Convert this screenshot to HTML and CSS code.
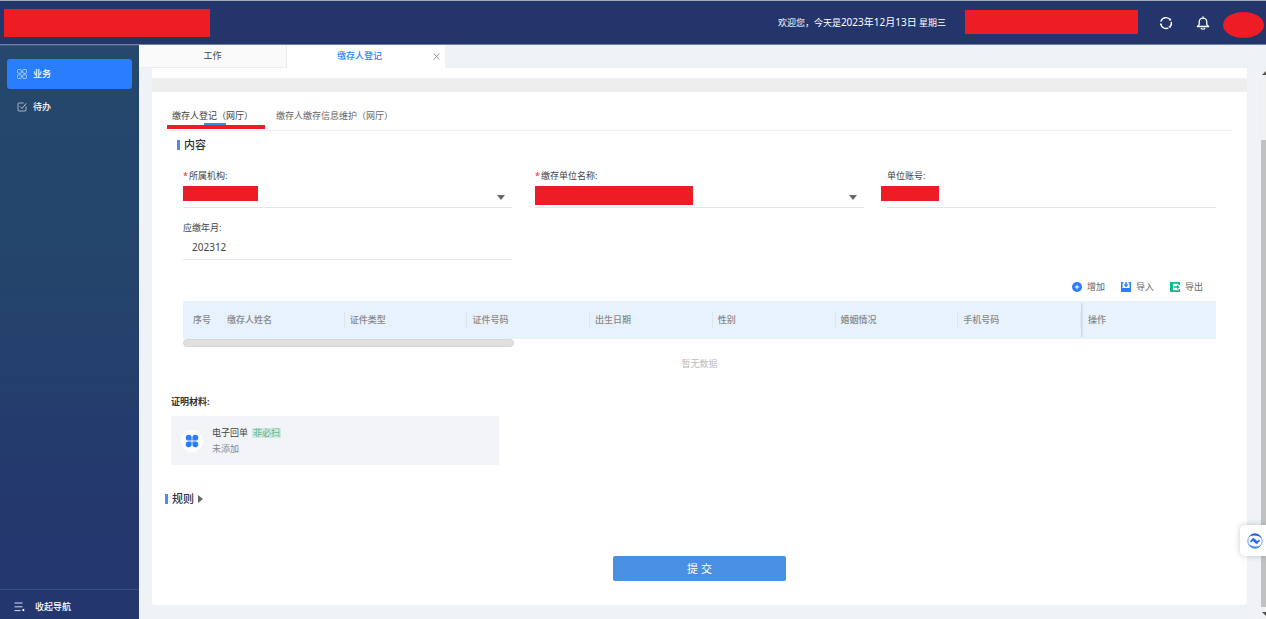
FILE: index.html
```html
<!DOCTYPE html>
<html lang="zh-CN">
<head>
<meta charset="utf-8">
<title>缴存人登记</title>
<link rel="stylesheet" href="styles.css">
</head>
<body>
<div class="app">
  <header class="header">
    <span class="mask mask-logo"></span>
    <span class="greeting">欢迎您，今天是<time datetime="2023-12-13">2023年12月13日</time> 星期三</span>
    <span class="mask mask-company"></span>
    <button class="icon-btn refresh" type="button" aria-label="刷新">
      <svg width="14" height="14" viewBox="0 0 14 14" fill="none" stroke="#fff" stroke-width="1.4"><path d="M1.8 5.6A5.4 5.4 0 0 1 11.4 3.9M12.3 5.8A5.4 5.4 0 0 1 11.2 10.4M9.4 11.9A5.4 5.4 0 0 1 1.7 8"/><path d="M9.9 4.4l2.300.2-.3-2.300zM12.300 9.400l-3 1.200 2 1.600zM.800 9.200l.8-2.300 1.800 1.700z" fill="#fff" stroke="none"/></svg>
    </button>
    <button class="icon-btn bell" type="button" aria-label="通知">
      <svg width="14" height="14" viewBox="0 0 14 14" fill="none" stroke="#fff" stroke-width="1.300" stroke-linejoin="round" stroke-linecap="round"><path d="M7 .8v1.100M3.200 8.600V5.900a3.800 3.800 0 0 1 7.600 0v2.700l1.800 1.900H1.400zM5.200 12.400c.8 1 2.800 1 3.600 0"/></svg>
    </button>
    <span class="mask mask-avatar"></span>
  </header>

  <div class="body">
    <nav class="sidebar" aria-label="导航">
      <div class="menu">
        <a class="menu-item active" href="#">
          <svg width="10" height="10" viewBox="0 0 10 10" fill="none" stroke="#b9d4ff" stroke-width="0.9"><rect x=".5" y=".5" width="3.8" height="3.8" rx="1"/><rect x="5.7" y=".5" width="3.8" height="3.8" rx="1"/><rect x=".5" y="5.7" width="3.8" height="3.8" rx="1"/><rect x="5.7" y="5.7" width="3.8" height="3.8" rx="1"/></svg>
          业务</a>
        <a class="menu-item" href="#">
          <svg width="10" height="10" viewBox="0 0 10 10" fill="none" stroke="#b4c0cf" stroke-width="0.9"><path d="M6.6 1H2a1 1 0 0 0-1 1v6a1 1 0 0 0 1 1h6a1 1 0 0 0 1-1V4.4"/><path d="M3 4.5l2 2L9.2 1.4" stroke-width="1"/></svg>
          待办</a>
      </div>
      <button class="collapse" type="button">
        <svg width="11" height="10" viewBox="0 0 11 10" fill="none" stroke="#d5dbea" stroke-width="1"><path d="M.5 1h8M.5 4.8h8M.5 8.6h6"/><path d="M10.2 6.6v2.8L7.6 8z" fill="#fff" stroke="none"/></svg>
        收起导航</button>
    </nav>

    <main class="main">
      <div class="page-tabs">
        <button class="page-tab" type="button">工作</button>
        <div class="page-tab current"><span>缴存人登记</span>
          <button class="close" type="button" aria-label="关闭"><svg width="7" height="7" viewBox="0 0 7 7" stroke="#8a8a8a" stroke-width="0.9"><path d="M.7.5l5.6 6M6.3.5l-5.6 6"/></svg></button>
        </div>
      </div>
      <div class="content">
        <div class="previous"></div>
        <section class="panel">
          <div class="sub-tabs" role="tablist">
            <button class="sub-tab selected" type="button" role="tab" aria-selected="true">缴存人登记（网厅）</button>
            <button class="sub-tab" type="button" role="tab" aria-selected="false">缴存人缴存信息维护（网厅）</button>
          </div>

          <form class="form">
            <h2 class="title title-content">内容</h2>
            <div class="fields">
              <div class="field">
                <label for="org"><i class="req">*</i>所属机构:</label>
                <div class="control">
                  <select id="org"><option></option></select>
                  <span class="caret"></span>
                  <span class="mask mask-org"></span>
                </div>
              </div>
              <div class="field">
                <label for="unit"><i class="req">*</i>缴存单位名称:</label>
                <div class="control">
                  <select id="unit"><option></option></select>
                  <span class="caret"></span>
                  <span class="mask mask-unit"></span>
                </div>
              </div>
              <div class="field">
                <label for="account">单位账号:</label>
                <div class="control">
                  <input id="account" type="text">
                  <span class="mask mask-account"></span>
                </div>
              </div>
              <div class="field">
                <label for="month">应缴年月:</label>
                <div class="control"><input id="month" type="text" value="202312"></div>
              </div>
            </div>

            <div class="actions">
              <button class="action" type="button"><svg width="10" height="10" viewBox="0 0 10 10"><circle cx="5" cy="5" r="5" fill="#2a7dff"/><path d="M5 2.8v4.4M2.8 5h4.4" stroke="#fff"/></svg>增加</button>
              <button class="action" type="button"><svg width="10" height="10" viewBox="0 0 10 10" fill="#2a7dff"><path d="M0 .5A.5.5 0 0 1 .5 0H2.500v1.300H1.500V6h7V1.300h-1V0h2a.5.5 0 0 1 .5.5v9a.5.5 0 0 1-.5.5h-9a.5.5 0 0 1-.5-.5z"/><path d="M4.300 0h1.400v2.500h1.800L5 5.200 2.500 2.500h1.800z"/></svg>导入</button>
              <button class="action" type="button"><svg width="10" height="10" viewBox="0 0 10 10"><path d="M.5 0h9a.5.5 0 0 1 .5.5V3H8.500V1.800H3v6.400h5.500V7H10v2.500a.5.5 0 0 1-.5.5h-9a.5.5 0 0 1-.5-.5v-9A.5.5 0 0 1 .5 0z" fill="#10b98a"/><path d="M4 4.300h3V2.700L9.800 5 7 7.300V5.700H4z" fill="#10b98a"/></svg>导出</button>
            </div>

            <table class="table">
              <colgroup><col class="col-index"><col span="7"><col class="col-ops"></colgroup>
              <thead>
                <tr><th class="index">序号</th><th>缴存人姓名</th><th>证件类型</th><th>证件号码</th><th>出生日期</th><th>性别</th><th>婚姻情况</th><th>手机号码</th><th class="ops">操作</th></tr>
              </thead>
            </table>
            <div class="h-scroll"></div>
            <p class="empty">暂无数据</p>
          </form>

          <div class="materials">
            <h3 class="materials-title">证明材料:</h3>
            <div class="card">
              <span class="card-icon"><svg width="14" height="14" viewBox="0 0 14 14" fill="#2a7dff"><path d="M3.700.7a3 3 0 0 1 2.900 3v2.900H3.700a2.950 2.950 0 0 1 0-5.900zM10.300.7a2.950 2.950 0 0 1 0 5.900H7.400V3.700a3 3 0 0 1 2.900-3zM3.700 7.400h2.900v2.900a2.950 2.950 0 1 1-2.900-2.900zM7.400 7.400h2.900a2.950 2.950 0 1 1-2.900 2.900z"/></svg></span>
              <div class="card-text">
                <div class="card-name">电子回单<span class="tag">非必扫</span></div>
                <div class="card-state">未添加</div>
              </div>
            </div>
          </div>

          <h2 class="title title-rules">规则<span class="tri"></span></h2>
          <div class="submit-row"><button class="submit" type="button">提 交</button></div>
        </section>
      </div>
    </main>
    <div class="scrollbar"><span class="arrow-up"></span><span class="thumb"></span><span class="arrow-down"></span></div>
  </div>
  <button class="float" type="button" aria-label="助手">
    <svg width="16" height="16" viewBox="0 0 16 16" fill="none"><circle cx="8" cy="8" r="7.200" stroke="#5a9af5" stroke-width=".9"/><path d="M2.500 3.500C5-.6 11.500-.8 14.600 5 11 2.300 6.500 1.800 2.500 3.500z" fill="#1b5fdc"/><path d="M13.500 12.500C11 16.600 4.500 16.800 1.400 11c3.600 2.700 8.100 3.200 12.100 1.500z" fill="#4a90f5"/><path d="M3.500 8.800l2.300-2.300 4.300 4.200M12.500 7.200l-2.300 2.300-4.300-4.200" stroke="#2a6fe6" stroke-width="1.800"/></svg>
  </button>
</div>
</body>
</html>
```
FILE: styles.css
```css
* { box-sizing: border-box; }
body {
  margin: 0;
  font: 9px/14px "Noto Sans", "Noto Sans CJK SC", sans-serif;
  color: #444;
  background: #eff3f8;
}
button, input, select {
  font: inherit;
  color: inherit;
  margin: 0;
  padding: 0;
  border: 0;
  background: none;
}
h2, h3, p { margin: 0; }
a { color: inherit; text-decoration: none; }
svg { display: block; flex: none; }

.app { min-height: 100vh; display: flex; flex-direction: column; }
.mask { background: #ee1c25; flex: none; }

.header {
  height: 45px;
  display: flex;
  align-items: center;
  padding: 0 2px 0 4px;
  background: #24356c;
  border-top: 1px solid #a4a9bb;
  border-bottom: 1px solid #7480a3;
  color: #fff;
}
.mask-logo { width: 206px; height: 28px; margin-right: auto; }
.greeting { margin-right: 19px; }
.greeting time { font-size: 10px; }
.mask-company { width: 173px; height: 24px; margin-bottom: 1px; }
.icon-btn { width: 14px; height: 14px; }
.refresh { margin-left: 21px; }
.bell { margin-left: 23px; }
.mask-avatar { width: 41px; height: 26px; border-radius: 50%; margin: 4px 0 0 13px; }

.body { flex: 1; display: flex; }
.sidebar {
  flex: none;
  width: 139px;
  display: flex;
  flex-direction: column;
  justify-content: space-between;
  background: linear-gradient(#25486c, #24446c 40%, #24386e 80%, #24366e);
  border-top: 1px solid #3c5a7c;
  color: #fff;
}
.menu { display: flex; flex-direction: column; gap: 3px; padding: 13px 7px; }
.menu-item {
  display: flex;
  align-items: center;
  gap: 6px;
  height: 30px;
  padding: 0 10px;
  border-radius: 3px;
  font-weight: 500;
}
.menu-item.active { background: #297dff; }
.collapse {
  display: flex;
  align-items: center;
  gap: 10px;
  height: 30px;
  padding: 4px 14px 0;
  border-top: 1px solid #36507f;
  font-weight: 500;
}

.main { flex: 1; min-width: 0; }
.page-tabs { display: flex; height: 23px; }
.page-tab { width: 148px; background: #fafafa; border-right: 1px solid #eaeaea; border-bottom: 1px solid #eee; }
.page-tab.current {
  position: relative;
  width: 158px;
  display: flex;
  align-items: center;
  padding: 0 0 2px 50px;
  background: #fff;
  border: 0;
  color: #1e8cff;
  font-weight: 500;
}
.close { position: absolute; right: 5px; top: 8px; }

.content { padding: 0 14px 14px 13px; }
.previous { height: 24px; background: #fff; border-bottom: 14px solid #eee; }
.panel { padding: 0 15px 24px; background: #fff; border-radius: 0 0 3px 3px; }
.sub-tabs { display: flex; gap: 23px; height: 39px; padding: 10px 5px 0; border-bottom: 1px solid #f0f0f0; color: #666; }
.sub-tab { position: relative; height: 28px; }
.sub-tab.selected { color: #444; }
.sub-tab.selected::before {
  content: "";
  position: absolute;
  left: 32px;
  top: 21px;
  width: 22px;
  height: 2px;
  background: #3f8ae6;
}
.sub-tab.selected::after {
  content: "";
  position: absolute;
  left: -5px;
  right: -12px;
  top: 23px;
  height: 4px;
  background: #ee1c25;
}

.form { padding: 6px 16px 0; }
.title { display: flex; align-items: center; font-size: 11px; line-height: 16px; font-weight: 500; color: #333; }
.title::before { content: ""; width: 3px; height: 10px; margin-right: 4px; background: #4a90e2; }
.title-content { margin-left: -6px; }

.fields { display: grid; grid-template-columns: repeat(3, 1fr); gap: 12px 23px; margin-top: 15px; }
.field label { display: flex; height: 16px; line-height: 16px; }
.req { width: 6px; color: #f5222d; font-style: normal; }
.control { position: relative; height: 24px; border-bottom: 1px solid #e6e6e6; }
.control input, .control select { appearance: none; width: 100%; height: 100%; padding: 0 9px 2px; font-size: 10px; outline: 0; }
.caret { position: absolute; right: 7px; top: 11px; border: 4px solid transparent; border-top: 5px solid #666; border-bottom: 0; pointer-events: none; }
.mask-org, .mask-unit, .mask-account { position: absolute; left: 0; top: 2px; }
.mask-org { width: 75px; height: 15px; }
.mask-unit { width: 158px; height: 19px; }
.mask-account { left: -6px; width: 58px; height: 15px; }

.actions { display: flex; justify-content: flex-end; gap: 16px; padding-right: 13px; margin: 20px 0 7px; }
.action { display: flex; align-items: center; gap: 5px; color: #666; }
.table { width: 100%; table-layout: fixed; border-collapse: collapse; background: #e7f2fd; color: #888; }
.col-index { width: 39px; }
.col-ops { width: 135px; }
.table th {
  height: 38px;
  padding: 0 5px;
  text-align: left;
  font-weight: 500;
  background: linear-gradient(#dbe6f1, #dbe6f1) right center / 1px 16px no-repeat;
}
.table .index { padding: 0 0 0 10px; background: none; }
.table .ops { padding-left: 7px; background: linear-gradient(90deg, #ccd6e0, #e7f2fd) left center / 3px 34px no-repeat; }
.h-scroll { width: 32%; height: 8px; border-radius: 4px; background: #e0e0e0; border: 1px solid #d6d6d6; }
.empty { margin-top: 10px; text-align: center; color: #bbb; }

.materials { padding: 24px 4px 0; }
.materials-title { font-size: 9px; line-height: 14px; font-weight: 700; color: #333; }
.card { display: flex; align-items: center; gap: 9px; width: 31%; height: 49px; margin-top: 7px; padding: 0 10px; background: #f2f4f8; }
.card-icon { display: grid; place-items: center; width: 22px; height: 22px; border-radius: 50%; background: #fff; }
.card-text { display: flex; flex-direction: column; gap: 2px; }
.card-name { display: flex; align-items: center; gap: 4px; }
.tag { padding: 0 1px; line-height: 10px; background: #cfe9e2; color: #58b79b; }
.card-state { color: #888; }
.title-rules { margin: 26px 0 0 -2px; }
.tri { margin-left: 4px; border: 4px solid transparent; border-left: 5px solid #666; border-right: 0; }
.submit-row { display: flex; justify-content: center; margin-top: 49px; }
.submit { width: 173px; height: 25px; border-radius: 2px; background: #4a90e2; color: #fff; font-size: 11px; }

.scrollbar { flex: none; width: 5px; margin-top: 23px; display: flex; flex-direction: column; background: #f1f1f1; overflow: hidden; }
.scrollbar span { flex: none; }
.thumb { background: #c1c1c1; }
.scrollbar .thumb { flex: 1; margin-top: 65px; margin-bottom: 5px; }
.arrow-up { margin: 3px 0 0 1px; border: 4px solid transparent; border-top: 0; border-bottom: 4px solid #505050; }
.arrow-down { margin: 0 0 3px 1px; border: 4px solid transparent; border-bottom: 0; border-top: 4px solid #505050; }
.float {
  position: fixed;
  right: 0;
  bottom: 63px;
  width: 26px;
  height: 31px;
  padding-left: 7px;
  border-radius: 5px 0 0 5px;
  background: #fff;
  box-shadow: 0 0 6px rgba(0, 0, 0, 0.2);
}
```
